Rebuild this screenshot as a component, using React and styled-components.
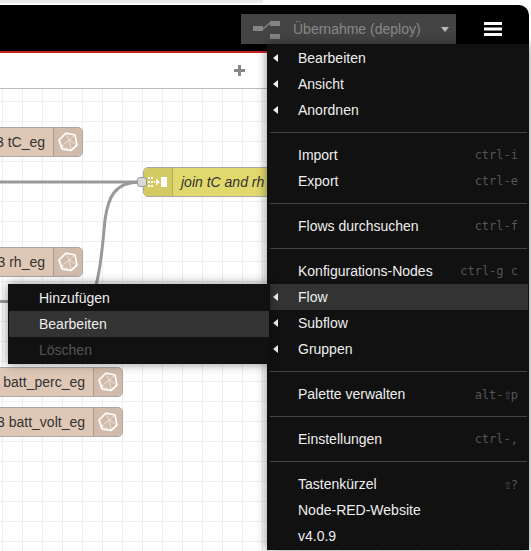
import React from "react";
import styled, { createGlobalStyle } from "styled-components";

const GlobalStyle = createGlobalStyle`
  html, body {
    margin: 0;
    padding: 0;
    background: #fff;
  }
  body {
    font-family: "Liberation Sans", Arial, sans-serif;
    font-size: 14px;
  }
`;

const Page = styled.div`
  position: relative;
  width: 531px;
  height: 551px;
  overflow: hidden;
  padding-top: 5px;
  box-sizing: border-box;
  background: linear-gradient(#e9e9e9, #e9e9e9) no-repeat 0 0 / 263px 3px, #fff;
`;

const Editor = styled.div`
  width: 529px;
  height: 546px;
  display: flex;
  flex-direction: column;
`;

const Header = styled.div`
  height: 37px;
  flex: none;
  background: #000;
  border-bottom: 2px solid #c8201f;
  border-top-right-radius: 10px;
  display: flex;
  justify-content: flex-end;
  padding-top: 9px;
`;

const DeployButton = styled.div`
  width: 215px;
  height: 30px;
  background: #444;
  display: flex;
  align-items: center;
  padding-left: 12px;
  box-sizing: border-box;
  color: #888;
`;

const DeployLabel = styled.span`
  margin-left: 12px;
  width: 148px;
`;

const DeployCaret = styled.span`
  width: 0;
  height: 0;
  margin-top: 1px;
  border-left: 4px solid transparent;
  border-right: 4px solid transparent;
  border-top: 5px solid #bbb;
`;

const MenuButton = styled.div`
  width: 73px;
  height: 30px;
  display: flex;
  align-items: center;
  justify-content: center;
`;

const TabBar = styled.div`
  height: 35px;
  flex: none;
  background: #fff;
  border-bottom: 1px solid #bbb;
  display: flex;
  align-items: center;
  padding-right: 284px;
  justify-content: flex-end;
`;

const Canvas = styled.div`
  position: relative;
  flex: 1;
  overflow: hidden;
  background-color: #fff;
  background-image: linear-gradient(#eee 1px, transparent 1px),
    linear-gradient(90deg, #eee 1px, transparent 1px);
  background-size: 20px 20px;
  background-position: 2px 12px;
`;

const Wires = styled.svg`
  position: absolute;
  left: 0;
  top: -89px;
  width: 280px;
  height: 400px;
`;

const Node = styled.div`
  position: absolute;
  left: ${(p) => p.$right - p.$width}px;
  top: ${(p) => p.$top - 89}px;
  width: ${(p) => p.$width}px;
  height: 30px;
  box-sizing: border-box;
  display: flex;
  border: 1px solid #a8a8a8;
  border-radius: 5px;
  background: ${(p) => p.$color};
  color: #333;
  white-space: nowrap;
`;

const NodeLabel = styled.div`
  flex: 1;
  display: flex;
  align-items: center;
  justify-content: flex-end;
  padding-right: 8px;
`;

const NodeIcon = styled.div`
  width: 29px;
  flex: none;
  display: flex;
  align-items: center;
  justify-content: center;
  background: #d2bbaa;
  border-left: 1px solid #aa9a8c;
  border-radius: 0 4px 4px 0;
  box-sizing: border-box;
`;

const JoinIcon = styled.div`
  width: 29px;
  flex: none;
  display: flex;
  align-items: center;
  justify-content: center;
  background: #d3ca63;
  border-right: 1px solid #b5ad58;
  border-radius: 4px 0 0 4px;
  box-sizing: border-box;
`;

const JoinLabel = styled.div`
  flex: 1;
  display: flex;
  align-items: center;
  padding-left: 8px;
  font-style: italic;
`;

const Port = styled.div`
  position: absolute;
  left: -7px;
  top: 9px;
  width: 10px;
  height: 10px;
  box-sizing: border-box;
  background: #d9d9d9;
  border: 1px solid #999;
  border-radius: 3px;
`;

const Menu = styled.div`
  position: absolute;
  left: ${(p) => p.$left}px;
  top: ${(p) => p.$top}px;
  width: ${(p) => p.$width}px;
  z-index: ${(p) => p.$z};
  box-sizing: border-box;
  padding: 1px ${(p) => p.$padRight}px 1px ${(p) => p.$padLeft}px;
  background: #111;
  box-shadow: 0 0 10px rgba(0, 0, 0, 0.45);
`;

const Item = styled.div`
  position: relative;
  height: 26px;
  display: flex;
  align-items: center;
  justify-content: space-between;
  padding: 0 10px 0 ${(p) => p.$indent}px;
  background: ${(p) => (p.$active ? "#333" : "transparent")};
  color: ${(p) => (p.$disabled ? "#555" : "#eee")};
`;

const Arrow = styled.span`
  position: absolute;
  left: 3px;
  top: 9px;
  width: 0;
  height: 0;
  border-top: 4.5px solid transparent;
  border-bottom: 4.5px solid transparent;
  border-right: 5px solid #eee;
`;

const Shortcut = styled.span`
  font-family: "DejaVu Sans Mono", monospace;
  font-size: 12px;
  color: #555;
`;

const ShiftGlyph = styled.span`
  font-size: 14px;
  line-height: 1;
  letter-spacing: -1.2px;
`;

const Divider = styled.div`
  height: 1px;
  margin: 9px 1px 9px 0;
  background: #444;
`;

const DeployIcon = () => (
  <svg width="28" height="20" viewBox="0 0 28 20">
    <g fill="#858585">
      <rect x="0" y="7" width="10" height="5" />
      <rect x="17" y="2" width="10" height="5" />
      <rect x="17" y="15" width="10" height="5" />
    </g>
    <path d="M10 10 L17 4" stroke="#858585" strokeWidth="1.5" fill="none" />
  </svg>
);

const Hamburger = () => (
  <svg width="18" height="16" viewBox="0 0 18 16">
    <g fill="#fff">
      <rect y="1" width="18" height="3" />
      <rect y="6.5" width="18" height="3" />
      <rect y="12" width="18" height="3" />
    </g>
  </svg>
);

const PlusIcon = () => (
  <svg width="11" height="11" viewBox="0 0 11 11">
    <path d="M4 0h3v4h4v3H7v4H4V7H0V4h4z" fill="#888" />
  </svg>
);

const Polyhedron = () => (
  <svg width="20" height="20" viewBox="0 0 20 20" fill="none" stroke="#fff">
    <path d="M1 8 L8 1 L17 3 L19 13 L13 18.5 L4 17 Z" strokeWidth="1.7" strokeLinejoin="round" />
    <path d="M8 1 L11 8 L17 3 M11 8 L4 14 L13 18.5 M11 8 L13 18.5 M1 8 L4 14 L4 17 M11 8 L19 13" strokeWidth="0.7" opacity="0.75" />
  </svg>
);

const JoinGlyph = () => (
  <svg width="20" height="10" viewBox="0 0 20 10" fill="#fff">
    <rect x="0" y="0" width="2" height="2" />
    <rect x="3" y="0" width="2" height="2" />
    <rect x="0" y="4" width="2" height="2" />
    <rect x="3" y="4" width="2" height="2" />
    <rect x="0" y="8" width="2" height="2" />
    <rect x="3" y="8" width="2" height="2" />
    <rect x="6" y="4" width="1" height="2" />
    <path d="M8 1.5 L12 5 L8 8.5 Z" />
    <rect x="13" y="0" width="6" height="10" />
  </svg>
);

const eventNodes = [
  { label: "3 tC_eg", right: 83, top: 127, width: 140 },
  { label: "3 rh_eg", right: 83, top: 247, width: 140 },
  { label: "3 batt_perc_eg", right: 123, top: 367, width: 180 },
  { label: "3 batt_volt_eg", right: 123, top: 407, width: 180 },
];

const mainMenu = [
  [
    { label: "Bearbeiten", arrow: true },
    { label: "Ansicht", arrow: true },
    { label: "Anordnen", arrow: true },
  ],
  [
    { label: "Import", keys: "ctrl-i" },
    { label: "Export", keys: "ctrl-e" },
  ],
  [{ label: "Flows durchsuchen", keys: "ctrl-f" }],
  [
    { label: "Konfigurations-Nodes", keys: "ctrl-g c" },
    { label: "Flow", arrow: true, active: true },
    { label: "Subflow", arrow: true },
    { label: "Gruppen", arrow: true },
  ],
  [
    {
      label: "Palette verwalten",
      keys: (
        <>
          alt-<ShiftGlyph>⇧</ShiftGlyph>p
        </>
      ),
    },
  ],
  [{ label: "Einstellungen", keys: "ctrl-," }],
  [
    {
      label: "Tastenkürzel",
      keys: (
        <>
          <ShiftGlyph>⇧</ShiftGlyph>?
        </>
      ),
    },
    { label: "Node-RED-Website" },
    { label: "v4.0.9" },
  ],
];

const App = () => {
  return (
    <Page>
      <GlobalStyle />
      <Editor>
        <Header>
          <DeployButton>
            <DeployIcon />
            <DeployLabel>Übernahme (deploy)</DeployLabel>
            <DeployCaret />
          </DeployButton>
          <MenuButton>
            <Hamburger />
          </MenuButton>
        </Header>
        <TabBar>
          <PlusIcon />
        </TabBar>
        <Canvas>
          <Wires viewBox="0 0 280 400">
            <g fill="none" stroke="#999" strokeWidth="3">
              <path d="M0 182 H140" />
              <path d="M140 182 C 114 182 108 198 105 220 C 102 250 101 268 96 285 C 92 297 80 301 60 301.5 H0" />
            </g>
          </Wires>
          {eventNodes.map((node) => (
            <Node
              key={node.label}
              $right={node.right}
              $top={node.top}
              $width={node.width}
              $color="#dfc7b6"
            >
              <NodeLabel>{node.label}</NodeLabel>
              <NodeIcon>
                <Polyhedron />
              </NodeIcon>
            </Node>
          ))}
          <Node $right={400} $top={167} $width={257} $color="#e2d96e">
            <Port />
            <JoinIcon>
              <JoinGlyph />
            </JoinIcon>
            <JoinLabel>join tC and rh</JoinLabel>
          </Node>
        </Canvas>
      </Editor>

      <Menu $left={267} $top={44} $width={262} $z={10} $padLeft={3} $padRight={1}>
        {mainMenu.map((group, i) => (
          <React.Fragment key={i}>
            {i > 0 && <Divider />}
            {group.map((item) => (
              <Item key={item.label} $indent={28} $active={item.active}>
                {item.arrow && <Arrow />}
                <span>{item.label}</span>
                {item.keys && <Shortcut>{item.keys}</Shortcut>}
              </Item>
            ))}
          </React.Fragment>
        ))}
      </Menu>

      <Menu $left={8} $top={284} $width={261} $z={20} $padLeft={1} $padRight={0}>
        <Item $indent={30}>Hinzufügen</Item>
        <Item $indent={30} $active>
          Bearbeiten
        </Item>
        <Item $indent={30} $disabled>
          Löschen
        </Item>
      </Menu>
    </Page>
  );
};

export default App;
